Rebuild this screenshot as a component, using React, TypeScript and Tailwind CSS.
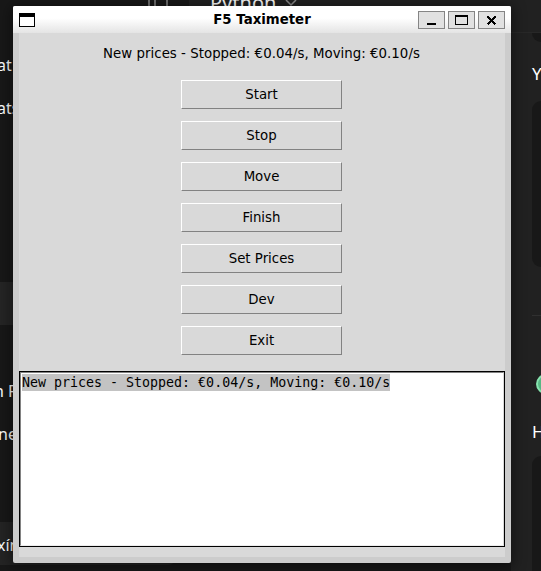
import React from "react";

const actions = ["Start", "Stop", "Move", "Finish", "Set Prices", "Dev", "Exit"];

function Backdrop() {
  return (
    <div className="grid h-full grid-cols-[189px_1fr] bg-[#181818] font-['Noto_Sans',sans-serif] text-[16px] leading-[20px] text-[#ffffff]">
      <aside className="flex flex-col">
        <svg className="ml-[146px] h-[14px] w-6 shrink-0" fill="none" stroke="#8b8b8b" strokeWidth="1.5"><path d="M3 0v14M9 0v10M21 0v14" /></svg>
        <span className="mt-[41px] -ml-[3px] h-[43px]">at</span>
        <span className="-ml-[3px] h-5">ats</span>
        <div className="mt-[164px] h-[43px] bg-[#252525]" />
        <span className="mt-[56px] -ml-[6px] h-[43px] whitespace-pre">n F</span>
        <span className="-ml-[2px] h-5">ne</span>
        <div className="mt-[78px] flex h-[43px] w-[176px] items-center rounded-br-lg bg-[#242424]">
          <span className="-ml-[3px] mt-[3px]">xín</span>
        </div>
      </aside>
      <section className="grid grid-cols-[322px_30px] grid-rows-[33px_1fr]">
        <header className="col-span-2 flex items-start gap-2 border-b border-[#282828] bg-[#212121] pl-[21px]">
          <span className="-mt-[7px] text-[20px]">Python</span>
          <svg className="-mt-[3px]" width="14" height="10" fill="none" stroke="#8b8b8b" strokeWidth="1.5"><path d="M2 3l5 5 5-5" /></svg>
        </header>
        <div />
        <aside className="flex flex-col overflow-hidden bg-[#212121] pl-[21px]">
          <div className="h-[9px] shrink-0 rounded-bl-[12px] bg-[#181818]" />
          <span className="mt-[22px] h-[37px] shrink-0 text-[17px]">Y</span>
          <div className="h-[166px] shrink-0 rounded-l-[18px] bg-[#181818]" />
          <div className="mt-[48px] h-px shrink-0 bg-[#303030]" />
          <div className="ml-1 mt-[58px] size-5 shrink-0 rounded-full border-2 border-[#86e3ae] bg-[#58b784]" />
          <span className="mt-[28px] h-[34px] shrink-0 text-[17px]">H</span>
          <div className="flex-1 rounded-tl-[18px] bg-[#181818]" />
        </aside>
      </section>
    </div>
  );
}

function TitleButton({ children }: { children: React.ReactNode }) {
  return (
    <button className="h-[18px] w-[27px] border border-[#858585] bg-[#e1e1e1]">
      <svg width="25" height="16" fill="none" stroke="black" shapeRendering="crispEdges">{children}</svg>
    </button>
  );
}

export default function App() {
  return (
    <div className="relative h-[571px] w-[541px] overflow-hidden">
      <Backdrop />
      <main className="absolute left-[13px] top-[6px] flex h-[557px] w-[498px] flex-col overflow-hidden rounded-[2px] bg-[#cccccc] font-['DejaVu_Sans',sans-serif] text-black shadow-[0_2px_14px_2px_rgba(0,0,0,0.45)]">
        <header className="grid h-[27px] shrink-0 grid-cols-[93px_1fr_93px] items-center bg-[linear-gradient(#ffffff_45%,#e4e4e4)] px-[6px]">
          <svg width="16" height="14" shapeRendering="crispEdges"><path d="M0 0h16v14H0z" /><path fill="white" d="M1 4h14v9H1z" /></svg>
          <h1 className="text-center text-[13.33px] font-bold leading-[18px]">F5 Taximeter</h1>
          <div className="flex justify-end gap-[3px]">
            <TitleButton><path d="M8 12h9" strokeWidth="2" /></TitleButton>
            <TitleButton><path d="M6.5 4v8.5h12V4" /><path d="M6 4h13" strokeWidth="2" /></TitleButton>
            <TitleButton><path d="M8.5 4.5l8 8m0-8l-8 8" strokeWidth="2" /></TitleButton>
          </div>
        </header>
        <section className="mx-[6px] flex h-[524px] flex-col items-center bg-[#d9d9d9]">
          <p className="mr-px mt-[11px] h-5 whitespace-pre text-[13.33px] leading-5 tracking-[0.03px]">New prices - Stopped: €0.04/s, Moving: €0.10/s</p>
          <div className="mr-px mt-4 flex flex-col gap-3">
            {actions.map((label) => (
              <button key={label} className="h-[29px] w-[161px] border border-b-[#828282] border-l-white border-r-[#828282] border-t-white text-[13.33px] leading-[18px]">{label}</button>
            ))}
          </div>
          <div className="mt-4 h-[176px] w-full border border-black bg-white">
            <div className="h-full border border-b-[#ececec] border-l-[#828282] border-r-[#d9d9d9] border-t-[#828282] pl-px pt-px">
              <span className="block h-[17px] w-[368px] whitespace-pre bg-[#c3c3c3] font-['DejaVu_Sans_Mono',monospace] text-[13.3px] leading-[17px]">New prices - Stopped: €0.04/s, Moving: €0.10/s</span>
            </div>
          </div>
        </section>
      </main>
    </div>
  );
}
